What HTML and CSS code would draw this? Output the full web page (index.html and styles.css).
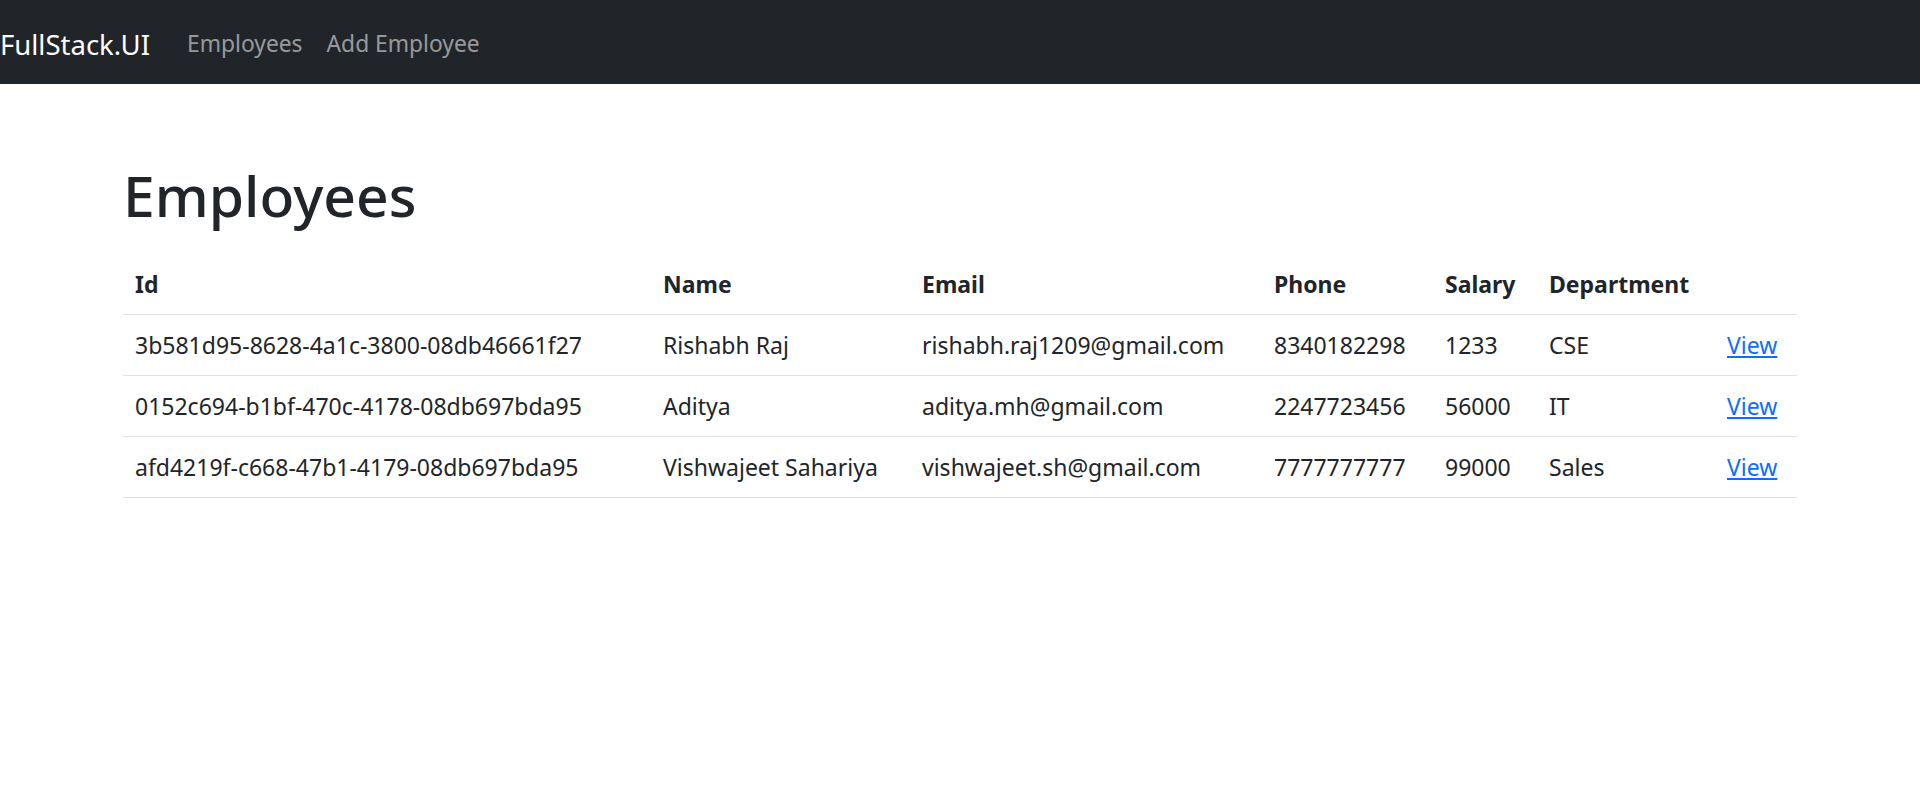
FILE: index.html
```html
<!DOCTYPE html>
<html lang="en">
<head>
<meta charset="utf-8">
<title>FullStack.UI</title>
<link rel="stylesheet" href="styles.css">
</head>
<body>
<nav class="navbar">
  <a class="brand" href="#">FullStack.UI</a>
  <ul class="nav">
    <li><a class="nav-link" href="#">Employees</a></li>
    <li><a class="nav-link" href="#">Add Employee</a></li>
  </ul>
</nav>
<main class="container">
  <h1 class="title">Employees</h1>
  <table class="table">
    <colgroup>
      <col class="c-id"><col class="c-name"><col class="c-email"><col class="c-phone"><col class="c-salary"><col class="c-dept"><col class="c-view">
    </colgroup>
    <thead>
      <tr><th>Id</th><th>Name</th><th>Email</th><th>Phone</th><th>Salary</th><th>Department</th><th></th></tr>
    </thead>
    <tbody>
      <tr><td>3b581d95-8628-4a1c-3800-08db46661f27</td><td>Rishabh Raj</td><td>rishabh.raj1209@gmail.com</td><td>8340182298</td><td>1233</td><td>CSE</td><td><a class="link" href="#">View</a></td></tr>
      <tr><td>0152c694-b1bf-470c-4178-08db697bda95</td><td>Aditya</td><td>aditya.mh@gmail.com</td><td>2247723456</td><td>56000</td><td>IT</td><td><a class="link" href="#">View</a></td></tr>
      <tr><td>afd4219f-c668-47b1-4179-08db697bda95</td><td>Vishwajeet Sahariya</td><td>vishwajeet.sh@gmail.com</td><td>7777777777</td><td>99000</td><td>Sales</td><td><a class="link" href="#">View</a></td></tr>
    </tbody>
  </table>
</main>
</body>
</html>
```
FILE: styles.css
```css
* { box-sizing: border-box; }
html, body { margin: 0; padding: 0; }
body {
  font-family: "Noto Sans", "Open Sans", sans-serif;
  font-size: 23px;
  line-height: 36px;
  color: #212529;
  background: #fff;
}
.navbar {
  background: #212529;
  height: 84px;
  display: flex;
  align-items: center;
  padding: 4px 0 0;
}
.brand {
  color: #fff;
  font-size: 27.5px;
  line-height: 45px;
  text-decoration: none;
  margin-right: 25px;
}
.nav {
  list-style: none;
  margin: 0;
  padding: 0;
  display: flex;
}
.nav-link {
  display: block;
  padding: 12px 12px;
  font-size: 22.8px;
  color: rgba(255,255,255,.55);
  text-decoration: none;
}
.container {
  width: 1710px;
  margin: 0 auto;
  padding: 72px 18px 0;
}
.title {
  font-size: 57px;
  font-weight: 500;
  line-height: 72px;
  padding-top: 3px;
  margin: 0 0 23px;
}
.table {
  width: 100%;
  table-layout: fixed;
  border-collapse: collapse;
}
.c-id { width: 528px; }
.c-name { width: 259px; }
.c-email { width: 352px; }
.c-phone { width: 171px; }
.c-salary { width: 104px; }
.c-dept { width: 178px; }
.c-view { width: 82px; }
.table th, .table td {
  padding: 12px 12px;
  text-align: left;
  border-bottom: 1px solid #dee2e6;
  white-space: nowrap;
  vertical-align: top;
}
.table th { font-weight: 700; }
.link { color: #0d6efd; text-decoration: underline; }
```
